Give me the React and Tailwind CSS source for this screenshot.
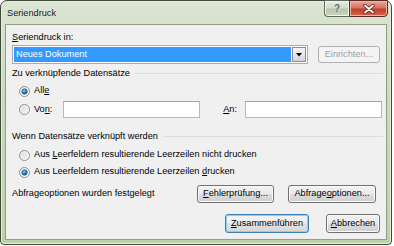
import React from 'react'

const btnFace =
  'bg-[linear-gradient(180deg,#f2f2f2_0%,#ebebeb_48%,#dddddd_52%,#cfcfcf_100%)] border border-[#707070] rounded-[3px] shadow-[inset_0_0_0_1px_#fbfbfb]'

function U({ children }) {
  return <span className="underline underline-offset-[1px] decoration-[1px]">{children}</span>
}

function Radio({ checked }) {
  return (
    <svg width="11" height="11" viewBox="0 0 11 11" className="shrink-0">
      <defs>
        <linearGradient id="radioFill" x1="0" y1="0" x2="1" y2="1">
          <stop offset="0" stopColor="#d6d6d6" />
          <stop offset="1" stopColor="#fbfbfb" />
        </linearGradient>
        <radialGradient id="radioDot" cx="0.4" cy="0.35" r="0.7">
          <stop offset="0" stopColor="#8fd0ff" />
          <stop offset="0.55" stopColor="#2a7fc9" />
          <stop offset="1" stopColor="#0d3f6e" />
        </radialGradient>
      </defs>
      <circle cx="5.5" cy="5.5" r="5" fill="url(#radioFill)" stroke="#8e8f8f" strokeWidth="1" />
      <circle cx="5.5" cy="5.5" r="3.8" fill="none" stroke="#f4f4f4" strokeWidth="0.8" />
      {checked && <circle cx="5.5" cy="5.5" r="2.7" fill="url(#radioDot)" stroke="#1e4e79" strokeWidth="0.6" />}
    </svg>
  )
}

function GroupHeading({ children, className }) {
  return (
    <div className={`h-[13px] flex items-center gap-[5px] ${className}`}>
      <span className="whitespace-nowrap">{children}</span>
      <div className="flex-1 h-px bg-[#d5dfe5] -mr-[1px]" />
    </div>
  )
}

export default function App() {
  return (
    <div className="w-[394px] h-[246px] bg-white font-['Liberation_Sans',Arial,sans-serif] text-[9.2px] text-black leading-none">
      <div className="w-[392px] h-[245px] flex flex-col rounded-t-[7px] rounded-b-[4px] border border-[#3d4a38] bg-[linear-gradient(180deg,#dce5d4_0%,#cbdabe_35%,#bcd1a9_100%)] shadow-[inset_0_0_0_1px_#e6eee0]">
        {/* Title bar */}
        <div className="h-[23px] flex items-start shrink-0">
          <div className="ml-[6px] mt-[7px] leading-[11px] text-[#1b1b1b]">Seriendruck</div>
          <div className="ml-auto mr-[3px] -mt-px flex">
            <div className="w-[25px] h-[17px] flex items-center justify-center rounded-bl-[4px] border border-[#5a6a5a] border-r-0 bg-[linear-gradient(180deg,#e6ece2_0%,#cfd9c8_48%,#b8c6ae_52%,#c7d5bd_100%)] shadow-[inset_0_0_0_1px_#f2f6ee]">
              <span className="font-bold text-[10px] text-[#5b6670] [text-shadow:0_0_1px_#fff]">?</span>
            </div>
            <div className="w-[39px] h-[17px] flex items-center justify-center rounded-br-[4px] border border-[#5a2a22] bg-[linear-gradient(180deg,#e9a99c_0%,#d9735f_45%,#c1402a_55%,#d4634b_100%)] shadow-[inset_0_0_0_1px_#f0b8ab]">
              <svg width="12" height="10" viewBox="0 0 12 10">
                <path d="M2 1.5 L10 8.5 M10 1.5 L2 8.5" stroke="#5c1f17" strokeWidth="3.4" strokeLinecap="round" />
                <path d="M2 1.5 L10 8.5 M10 1.5 L2 8.5" stroke="#ffffff" strokeWidth="1.8" strokeLinecap="round" />
              </svg>
            </div>
          </div>
        </div>

        {/* Client area */}
        <div className="mx-[4px] mb-[4px] flex-1 border border-[#8fa083] bg-[#f0f0f0] flex flex-col pl-[6px] pr-[4px]">
          <div className="mt-[6px] h-[13px] flex items-center">
            <span><U>S</U>eriendruck in:</span>
          </div>

          <div className="mt-[1px] h-[19px] flex items-center">
            <div className="w-[296px] h-[19px] border border-[#a5acb5] bg-white flex items-stretch p-[1px]">
              <div className="flex-1 bg-[#3399ff] text-white flex items-center pl-[2px]">Neues Dokument</div>
              <div className="w-[14px] ml-[1px] border border-[#8c8c8c] bg-[linear-gradient(180deg,#f4f4f4_0%,#e6e6e6_50%,#d4d4d4_100%)] flex items-center justify-center">
                <svg width="6" height="4" viewBox="0 0 6 4">
                  <path d="M0 0 H6 L3 3.5 Z" fill="#000" />
                </svg>
              </div>
            </div>
            <div className="ml-[10px] w-[62px] h-[17px] rounded-[3px] border border-[#adb2b5] bg-[#f4f4f4] text-[#a0a0a0] flex items-center justify-center">
              Einrichten...
            </div>
          </div>

          <GroupHeading className="mt-[3px]">Zu verknüpfende Datensätze</GroupHeading>

          <div className="mt-[3px] h-[16px] flex items-center">
            <div className="ml-[7px] flex items-center gap-[4px]">
              <Radio checked />
              <span>All<U>e</U></span>
            </div>
          </div>

          <div className="mt-[2px] h-[17px] flex items-center">
            <div className="w-[51px] pl-[7px] flex items-center gap-[4px]">
              <Radio />
              <span>Vo<U>n</U>:</span>
            </div>
            <div className="w-[137px] h-[17px] bg-white border border-[#b5b9bf] border-t-[#9ea3a9]" />
            <div className="w-[45px] flex justify-end pr-[8px]">
              <span><U>A</U>n:</span>
            </div>
            <div className="w-[137px] h-[17px] bg-white border border-[#b5b9bf] border-t-[#9ea3a9]" />
          </div>

          <GroupHeading className="mt-[12px]">Wenn Datensätze verknüpft werden</GroupHeading>

          <div className="mt-[4px] h-[16px] flex items-center">
            <div className="ml-[7px] flex items-center gap-[4px]">
              <Radio />
              <span>Aus <U>L</U>eerfeldern resultierende Leerzeilen nicht drucken</span>
            </div>
          </div>

          <div className="mt-[1px] h-[16px] flex items-center">
            <div className="ml-[7px] flex items-center gap-[4px]">
              <Radio checked />
              <span>Aus Leerfeldern resultierende Leerzeilen <U>d</U>rucken</span>
            </div>
          </div>

          <div className="mt-[5px] h-[18px] flex items-center">
            <span>Abfrageoptionen wurden festgelegt</span>
            <div className={`ml-auto w-[77px] h-[18px] flex items-center justify-center ${btnFace}`}>
              <span><U>F</U>ehlerprüfung...</span>
            </div>
            <div className={`ml-[14px] mr-[6px] w-[88px] h-[18px] flex items-center justify-center ${btnFace}`}>
              <span>Abfrage<U>o</U>ptionen...</span>
            </div>
          </div>

          <div className="mt-[11px] h-[19px] flex items-center justify-end">
            <div className="w-[84px] h-[19px] flex items-center justify-center rounded-[3px] border border-[#3c7fb1] bg-[linear-gradient(180deg,#f4f4f4_0%,#eeeeee_48%,#e2e2e2_52%,#d6d6d6_100%)] shadow-[inset_0_0_0_1px_#7fd6f4]">
              <span><U>Z</U>usammenführen</span>
            </div>
            <div className={`ml-[17px] mr-[2px] w-[54px] h-[19px] flex items-center justify-center ${btnFace}`}>
              <span><U>A</U>bbrechen</span>
            </div>
          </div>
        </div>
      </div>
    </div>
  )
}
